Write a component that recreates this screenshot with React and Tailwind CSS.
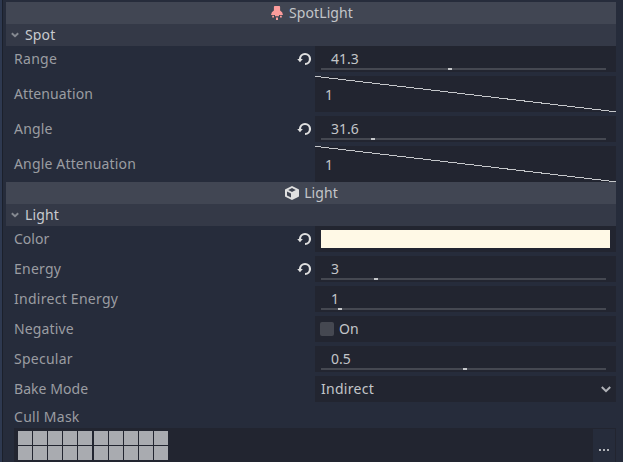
function Revert() {
  return (
    <svg width="16" height="16" viewBox="0 0 16 16" className="mr-[3px] shrink-0">
      <path d="M4 9V8a5 5 0 1 1 5 5" fill="none" stroke="#e0e0e0" strokeWidth="2.2" />
      <path d="M1.2 8h5.6L4 11.3Z" fill="#e0e0e0" />
    </svg>
  );
}

function Chevron() {
  return (
    <svg width="8" height="6" viewBox="0 0 8 6" className="ml-[5px] mr-[6px] shrink-0">
      <path d="M.8 1.2 4 4.3 7.2 1.2" fill="none" stroke="#858991" strokeWidth="1.9" />
    </svg>
  );
}

function SpotIcon() {
  return (
    <svg width="16" height="16" viewBox="0 0 16 16" className="shrink-0">
      <path
        d="M5.8 1a.9.9 0 0 0-.9.9V5.6A5.6 5.6 0 0 0 2 10h4v1.2h4V10h4a5.6 5.6 0 0 0-2.9-4.4V1.9a.9.9 0 0 0-.9-.9ZM3.2 10.8v1.6h1.8v-1.6Zm7.8 0v1.6h1.8v-1.6ZM7 12.6v2.4h2v-2.4Z"
        fill="#fc9c9c"
      />
    </svg>
  );
}

function CubeIcon() {
  return (
    <svg width="16" height="16" viewBox="0 0 16 16" className="shrink-0">
      <path
        fillRule="evenodd"
        d="M8 .9 14.6 4.2a.8.8 0 0 1 .4.7v6.2a.8.8 0 0 1-.4.7L8 15.1 1.4 11.8a.8.8 0 0 1-.4-.7V4.9a.8.8 0 0 1 .4-.7ZM8 3.1 4.2 5 8 6.9 11.8 5ZM3 6.6v3.9l4 2V8.6Z"
        fill="#e0e0e0"
      />
    </svg>
  );
}

function Header({ icon, children }) {
  return (
    <div className="flex h-[22px] items-center justify-center gap-[4px] bg-[#414653] tracking-[0.08px] text-[#c3c5c9]">
      {icon}
      <span>{children}</span>
    </div>
  );
}

function Section({ children }) {
  return (
    <div className="flex h-[22px] items-center bg-[#343947] tracking-[0.15px] text-[#c9cbcf]">
      <Chevron />
      <span>{children}</span>
    </div>
  );
}

function Row({ label, revert, tall, tracking = "", children }) {
  return (
    <div className={`flex ${tall ? "h-[36px]" : "h-[26px]"}`}>
      <div className="flex w-[309px] items-center pl-[8px] text-[#9b9da2]">
        <span className={`grow ${tracking}`}>{label}</span>
        {revert && <Revert />}
      </div>
      <div className="w-[301px] bg-[#222530] text-[#c3c5c9]">{children}</div>
    </div>
  );
}

function Slider({ value, offset }) {
  return (
    <div className="flex h-full flex-col pl-[6px] pr-[10px]">
      <div className="h-[22px] pl-[10px] leading-[26px]">{value}</div>
      <div className="h-[2px] bg-[#454851]">
        <div className="h-[2px] w-[4px] bg-[#c5c7ca]" style={{ marginLeft: offset }} />
      </div>
    </div>
  );
}

function Curve() {
  return (
    <div className="relative h-full">
      <svg width="301" height="36" className="absolute inset-0" shapeRendering="crispEdges">
        <path d="M0 0.3 301 35.8" stroke="#c5c7ca" strokeWidth="1" />
      </svg>
      <div className="pl-[10px] leading-[38px]">1</div>
    </div>
  );
}

function MaskGroup() {
  return (
    <div className="grid grid-cols-[repeat(5,14px)] grid-rows-[repeat(2,14px)] gap-px">
      {Array.from({ length: 10 }, (_, i) => (
        <div key={i} className="bg-[#a9abb0]" />
      ))}
    </div>
  );
}

export default function App() {
  return (
    <div className="flex h-[462px] w-[623px] overflow-hidden bg-[#262c3b] font-['Noto_Sans',sans-serif] text-[14px] leading-[20px] whitespace-nowrap">
      <div className="w-[3px] shrink-0 border-r border-[#1b202b] bg-[#2e3950]" />
      <div className="ml-[3px] w-[610px] pt-[2px]">
        <Header icon={<SpotIcon />}>SpotLight</Header>
        <Section>Spot</Section>
        <div className="flex flex-col gap-[4px]">
          <Row label="Range" tracking="tracking-[0.3px]" revert><Slider value="41.3" offset={127} /></Row>
          <Row label="Attenuation" tracking="tracking-[0.1px]" tall><Curve /></Row>
          <Row label="Angle" tracking="tracking-[0.2px]" revert><Slider value="31.6" offset={50} /></Row>
          <Row label="Angle Attenuation" tracking="tracking-[0.16px]" tall><Curve /></Row>
        </div>
        <Header icon={<CubeIcon />}>Light</Header>
        <Section>Light</Section>
        <div className="flex flex-col gap-[4px]">
          <Row label="Color" revert>
            <div className="px-[6px] py-[4px]">
              <div className="h-[18px] bg-[#fff9e6]" />
            </div>
          </Row>
          <Row label="Energy" tracking="tracking-[0.25px]" revert><Slider value="3" offset={53} /></Row>
          <Row label="Indirect Energy" tracking="tracking-[0.27px]"><Slider value="1" offset={17} /></Row>
          <Row label="Negative" tracking="tracking-[0.15px]">
            <div className="flex h-full items-center gap-[5px] pl-[5px]">
              <div className="size-[14px] rounded-[2px] bg-[#454851]" />
              <span>On</span>
            </div>
          </Row>
          <Row label="Specular" tracking="tracking-[0.25px]"><Slider value="0.5" offset={142} /></Row>
          <Row label="Bake Mode" tracking="tracking-[0.06px]">
            <div className="flex h-full items-center justify-between pl-[6px] pr-[5px]">
              <span className="tracking-[0.27px]">Indirect</span>
              <svg width="10" height="7" viewBox="0 0 10 7">
                <path d="M.8 1 5 5.2 9.2 1" fill="none" stroke="#b0b2b7" strokeWidth="2" />
              </svg>
            </div>
          </Row>
        </div>
        <div className="h-[26px] pl-[8px] pt-[4px] leading-[22px] tracking-[0.28px] text-[#9b9da2]">Cull Mask</div>
        <div className="ml-[8px] flex h-[34px] justify-between bg-[#222530] pl-[4px] pr-px">
          <div className="flex gap-[2px] pt-[3px]">
            <MaskGroup />
            <MaskGroup />
          </div>
          <div className="mt-px flex w-[22px] justify-center gap-[2px] bg-[#262c3b] pt-[20px]">
            <div className="size-[2px] bg-[#b0b2b7]" />
            <div className="size-[2px] bg-[#b0b2b7]" />
            <div className="size-[2px] bg-[#b0b2b7]" />
          </div>
        </div>
      </div>
    </div>
  );
}
